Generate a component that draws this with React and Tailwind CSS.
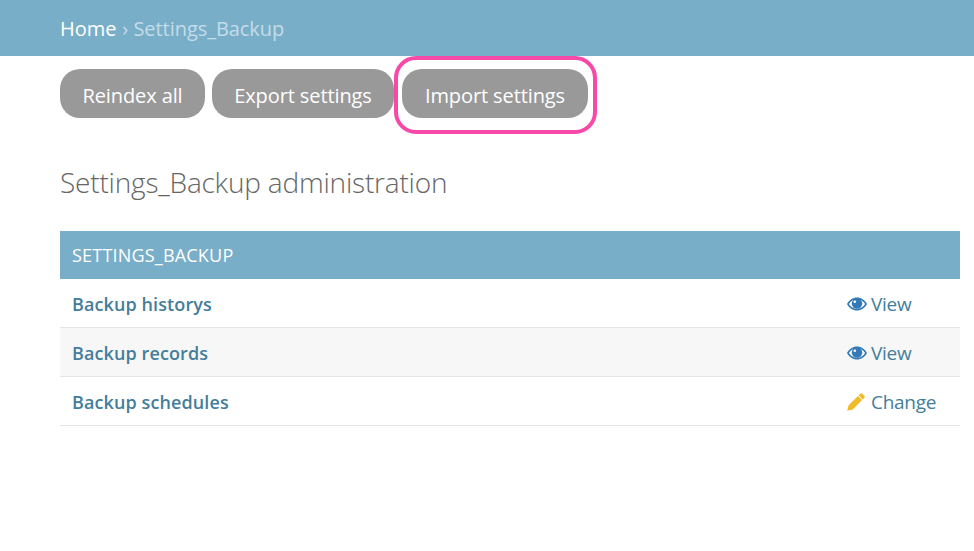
const rows = [
  { name: 'Backup historys', action: 'View' },
  { name: 'Backup records', action: 'View', striped: true },
  { name: 'Backup schedules', action: 'Change' },
];

const EyeIcon = () => (
  <svg viewBox="0 0 20 14" className="w-[20px] h-[14px]">
    <path fill="#337ab7" fillRule="evenodd" d="M10 0.500C5.800 0.500 2.200 3 0 7c2.200 4 5.800 6.500 10 6.500s7.800-2.500 10-6.500C17.800 3 14.200 0.500 10 0.500zM10 2.200c-3.400 0-6.300 1.800-8.100 4.800 1.800 3 4.700 4.800 8.100 4.800s6.300-1.800 8.100-4.800C16.300 4 13.400 2.200 10 2.200z" />
    <circle cx="10" cy="6.500" r="5.200" fill="#337ab7" />
    <circle cx="7.800" cy="4.700" r="1.300" fill="#ffffff" />
  </svg>
);

const PencilIcon = () => (
  <svg viewBox="0 0 18 18" className="w-[18px] h-[18px]">
    <path fill="#f0bb2b" d="M13.200 0.800a1.500 1.500 0 0 1 2.100 0l2 2a1.500 1.500 0 0 1 0 2.100l-1.500 1.500-4.100-4.100zM11 3l4.100 4.100-9.300 9.300-5.600 1.400 1.400-5.500z" />
  </svg>
);

const App = () => {
  return (
    <div className="h-[551px] bg-white font-['Open_Sans',sans-serif] overflow-hidden">
      <div className="h-14 bg-[#79aec8] pl-[60px] pt-[2px] flex items-center text-[20px] tracking-[-0.05px]">
        <span className="text-white">Home</span>
        <span className="text-[#c4dce8] ml-[6px]">› Settings_Backup</span>
      </div>

      <div className="relative flex gap-[7px] pl-[60px] pt-[13px]">
        <button className="w-[145px] h-[49px] pt-1 rounded-[20px] bg-[#999999] text-white text-[20px] tracking-[-0.1px]">Reindex all</button>
        <button className="w-[182px] h-[49px] pt-1 rounded-[20px] bg-[#999999] text-white text-[20px] tracking-[-0.1px]">Export settings</button>
        <button className="w-[186px] h-[49px] pt-1 ml-[1px] rounded-[20px] bg-[#999999] text-white text-[20px] tracking-[-0.1px]">Import settings</button>
        <div className="absolute left-[394px] top-0 w-[203px] h-[78px] border-4 border-[#f74aa8] rounded-[22px]" />
      </div>

      <h1 className="pl-[60px] mt-[41px] text-[28px] leading-[46px] font-light text-[#666666] tracking-[-0.2px]">Settings_Backup administration</h1>

      <div className="ml-[60px] mr-[14px] mt-[26px]">
        <div className="h-12 bg-[#79aec8] flex items-center px-3 text-white text-[18px] tracking-[0.2px]">SETTINGS_BACKUP</div>
        {rows.map((r) => (
          <div key={r.name} className={`h-[49px] pt-[2px] border-b border-[#e5e5e5] flex items-center justify-between ${r.striped ? 'bg-[#f7f7f7]' : 'bg-white'}`}>
            <a className="pl-3 text-[18px] font-semibold text-[#447e9b] tracking-[0.1px]">{r.name}</a>
            <a className="w-[113px] flex items-center text-[19px] text-[#447e9b] tracking-[-0.3px]">
              {r.action === 'View' ? <EyeIcon /> : <PencilIcon />}
              <span className={r.action === 'View' ? 'ml-[4px]' : 'ml-[6px]'}>{r.action}</span>
            </a>
          </div>
        ))}
      </div>
    </div>
  );
};

export default App;
